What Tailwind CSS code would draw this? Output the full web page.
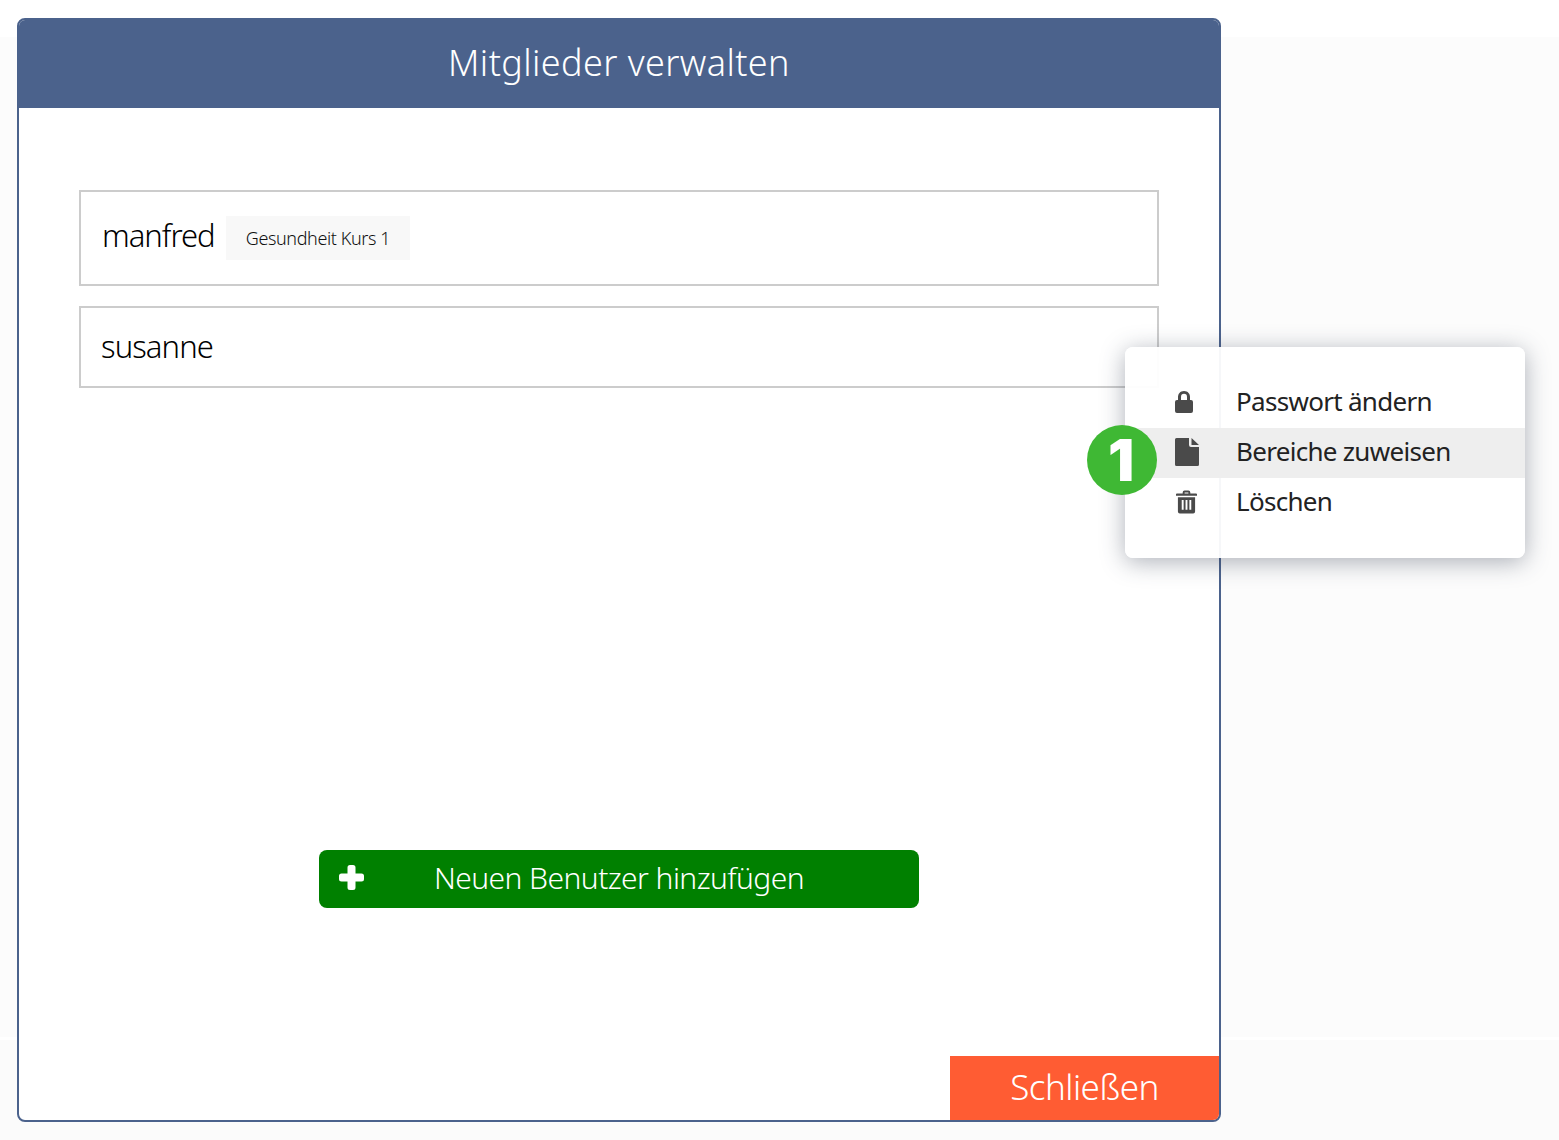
<!DOCTYPE html>
<html lang="de">
<head>
    <meta charset="UTF-8">
    <meta name="viewport" content="width=device-width, initial-scale=1.0">
    <title>Mitglieder verwalten</title>
    <script src="https://cdn.jsdelivr.net/npm/@tailwindcss/browser@4"></script>
</head>
<body class="relative h-[1140px] w-[1559px] overflow-hidden bg-white font-['Noto_Sans',sans-serif]">
    <!-- Page background behind the dialog -->
    <div class="h-[37px] bg-white"></div>
    <div class="h-[1000px] bg-[#fcfcfc]"></div>
    <div class="h-[3px] bg-white"></div>
    <div class="h-[100px] bg-[#fbfbfb]"></div>

    <!-- Dialog -->
    <div class="absolute left-[17px] top-[18px] flex h-[1104px] w-[1204px] flex-col overflow-hidden rounded-lg border-2 border-[#4b628c] bg-white">
        <div class="-mt-[2px] flex h-[90px] shrink-0 items-center justify-center bg-[#4b628c] text-[36px] font-light tracking-[0.4px] text-white">Mitglieder verwalten</div>

        <div class="flex flex-1 flex-col px-[60px] pt-[82px]">
            <div class="flex h-[96px] items-center border-2 border-[#cccccc] pl-[21px]">
                <span class="-mt-[6px] w-[112px] text-[31px] font-light tracking-[-1px] text-black">manfred</span>
                <span class="ml-[12px] flex h-[44px] w-[184px] items-center justify-center bg-[#f8f8f8] text-[18px] font-light tracking-[-0.4px] text-[#111]">Gesundheit Kurs 1</span>
            </div>
            <div class="mt-[20px] flex h-[82px] items-center border-2 border-[#cccccc] pl-[20px] text-[31px] font-light tracking-[-0.9px] text-black"><span class="-mt-[2px]">susanne</span></div>

            <button class="relative mx-auto mt-[462px] flex h-[58px] w-[600px] items-center justify-center rounded-lg bg-[#008000] pb-[4px] text-[30px] font-light tracking-[-0.56px] text-white">
                <svg class="absolute left-[20px] top-[15px] h-[25px] w-[25px]" viewBox="0 0 25 25" fill="#fff"><path d="M8.500 2.500A2.500 2.500 0 0 1 11 0h3a2.500 2.500 0 0 1 2.500 2.500v6h6A2.500 2.500 0 0 1 25 11v3a2.500 2.500 0 0 1-2.500 2.500h-6v6A2.500 2.500 0 0 1 14 25h-3a2.500 2.500 0 0 1-2.500-2.500v-6h-6A2.500 2.500 0 0 1 0 14v-3a2.500 2.500 0 0 1 2.500-2.500h6z"/></svg>
                Neuen Benutzer hinzufügen
            </button>
        </div>

        <div class="flex justify-end">
            <button class="flex h-[64px] w-[269px] items-center justify-center bg-[#ff5c33] pb-[2px] text-[35px] font-light tracking-[-0.5px] text-white">Schließen</button>
        </div>
    </div>

    <!-- Context menu -->
    <div class="absolute left-[1125px] top-[347px] h-[211px] w-[400px] rounded-lg bg-white/95 pt-[31px] text-[26px] tracking-[-0.7px] text-[#222] shadow-[0_4px_24px_rgba(50,60,80,0.4)]">
        <div class="flex h-[50px] items-center">
            <div class="-mt-[2px] w-[110px] pl-[50px]">
                <svg class="h-[22px] w-[18px]" viewBox="0 0 18 22" fill="#4a4a4a"><path d="M9 0C5 0 3 3 3 6v3H2a2 2 0 0 0-2 2v9a2 2 0 0 0 2 2h14a2 2 0 0 0 2-2v-9a2 2 0 0 0-2-2h-1V6c0-3-2-6-6-6zM6 9V6c0-2 1-3.200 3-3.200S12 4 12 6v3z"/></svg>
            </div>
            <span class="-mt-[4px] ml-[1px]">Passwort ändern</span>
        </div>
        <div class="flex h-[50px] items-center bg-[#eeeeee]">
            <div class="-mt-[2px] w-[110px] pl-[50px]">
                <svg class="h-[28px] w-[24px]" viewBox="0 0 24 28" fill="#4a4a4a"><path d="M1.500 0H14v7a2 2 0 0 0 2 2h8v17.500a1.500 1.500 0 0 1-1.500 1.500h-21A1.500 1.500 0 0 1 0 26.500v-25A1.500 1.500 0 0 1 1.500 0zM16.500 0 24 7h-7.500z"/></svg>
            </div>
            <span class="-mt-[4px] ml-[1px]">Bereiche zuweisen</span>
        </div>
        <div class="flex h-[50px] items-center">
            <div class="-mt-[2px] w-[110px] pl-[51px]">
                <svg class="h-[24px] w-[21px]" viewBox="0 0 22 24" fill="#4a4a4a"><path d="M7 3V2a2 2 0 0 1 2-2h4a2 2 0 0 1 2 2v1h6a1 1 0 0 1 1 1v1.500H0V4a1 1 0 0 1 1-1zM9 3h4V2H9z"/><path fill-rule="evenodd" d="M2 7h18v15a2 2 0 0 1-2 2H4a2 2 0 0 1-2-2zM6 10v10h2V10zM10 10v10h2V10zM14 10v10h2V10z"/></svg>
            </div>
            <span class="-mt-[4px] ml-[1px]">Löschen</span>
        </div>
    </div>

    <!-- Step badge -->
    <div class="absolute left-[1087px] top-[425px] flex h-[70px] w-[70px] items-center justify-center rounded-full bg-[#3fb834] pr-[2px] font-['Inter',sans-serif] text-[58px] font-black leading-none text-white">1</div>
</body>
</html>
